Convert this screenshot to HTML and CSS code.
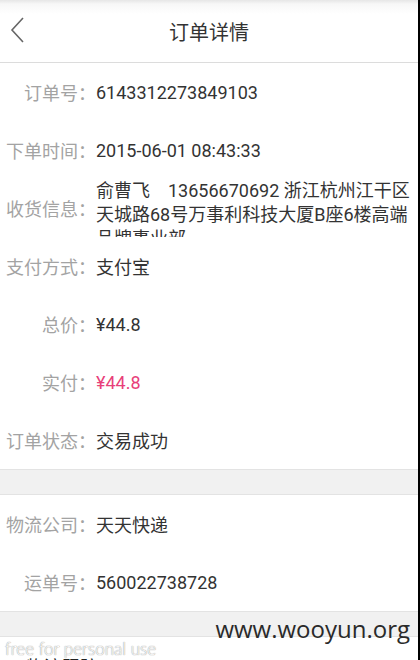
FILE: index.html
```html
<!DOCTYPE html>
<html lang="zh-CN">
<head>
  <meta charset="UTF-8">
  <meta name="viewport" content="width=device-width, initial-scale=1.0">
  <title>订单详情</title>
  <link rel="stylesheet" href="styles.css">
</head>
<body>
  <div class="page">
    <div class="header">
      <svg class="back" width="16" height="28" viewBox="0 0 16 28">
        <polyline points="13,2 2,14 13,26" fill="none" stroke="#666" stroke-width="1.6"/>
      </svg>
      <h1>订单详情</h1>
    </div>

    <div class="section">
      <div class="row">
        <span class="label">订单号：</span>
        <span class="value">6143312273849103</span>
      </div>
      <div class="row">
        <span class="label">下单时间：</span>
        <span class="value">2015-06-01 08:43:33</span>
      </div>
      <div class="row">
        <span class="label">收货信息：</span>
        <span class="value address">俞曹飞　13656670692 浙江杭州江干区天城路68号万事利科技大厦B座6楼高端品牌事业部</span>
      </div>
      <div class="row">
        <span class="label">支付方式：</span>
        <span class="value">支付宝</span>
      </div>
      <div class="row">
        <span class="label">总价：</span>
        <span class="value">¥44.8</span>
      </div>
      <div class="row">
        <span class="label">实付：</span>
        <span class="value price">¥44.8</span>
      </div>
      <div class="row">
        <span class="label">订单状态：</span>
        <span class="value">交易成功</span>
      </div>
    </div>

    <div class="gap"></div>

    <div class="section">
      <div class="row">
        <span class="label">物流公司：</span>
        <span class="value">天天快递</span>
      </div>
      <div class="row">
        <span class="label">运单号：</span>
        <span class="value">560022738728</span>
      </div>
    </div>

    <div class="gap"></div>

    <div class="section">
      <div class="row track">物流跟踪</div>
    </div>

    <div class="mark-site">www.wooyun.org</div>
    <div class="mark-free">free for personal use</div>
  </div>
</body>
</html>
```

FILE: styles.css
```css
body {
  margin: 0;
  background: #000;
  font-family: Roboto, "Noto Sans CJK SC", sans-serif;
}
.page {
  position: relative;
  width: 418px;
  height: 660px;
  overflow: hidden;
  background: #fff;
}
.header {
  position: relative;
  height: 62px;
  display: flex;
  align-items: center;
  justify-content: center;
  background: linear-gradient(#e6e6e6 0, #f7f7f7 4px, #fff 14px);
  border-bottom: 1px solid #dcdcdc;
}
.header h1 {
  margin: 0;
  font-size: 20px;
  font-weight: normal;
  color: #333;
}
.back {
  position: absolute;
  left: 10px;
  top: 16px;
}
.row {
  display: flex;
  align-items: center;
  height: 58px;
  font-size: 18px;
}
.label {
  width: 96px;
  flex-shrink: 0;
  text-align: right;
  color: #a3a3a3;
}
.value {
  flex: 1;
  color: #333;
}
.address {
  align-self: flex-start;
  height: 58px;
  overflow: hidden;
  line-height: 24px;
}
.price {
  color: #e8407a;
}
.gap {
  height: 24px;
  background: #f1f1f1;
  border-top: 1px solid #e3e3e3;
  border-bottom: 1px solid #e3e3e3;
}
.track {
  padding-left: 26px;
  color: #222;
}
.mark-site {
  position: absolute;
  right: 8px;
  top: 612px;
  font-family: "Open Sans", sans-serif;
  font-size: 24px;
  color: #2a2a2a;
}
.mark-free {
  position: absolute;
  left: 5px;
  top: 638px;
  font-family: Lato, sans-serif;
  font-size: 17px;
  font-weight: 300;
  color: #fff;
  text-shadow: 0 0 1px #999, 0 0 1px #999;
}
```
